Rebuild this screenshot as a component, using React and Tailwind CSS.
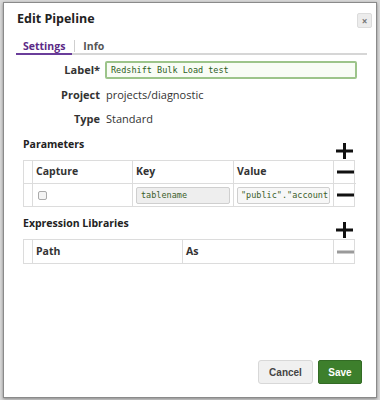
import React from 'react';

const sans = { fontFamily: '"Open Sans", "Noto Sans", sans-serif' };
const mono = { fontFamily: '"DejaVu Sans Mono", monospace' };

function PlusIcon() {
    return (
        <svg width="17" height="16" viewBox="0 0 17 16" className="block">
            <rect x="7" y="0" width="3" height="16" fill="#111" />
            <rect x="0" y="6.5" width="17" height="3" fill="#111" />
        </svg>
    );
}

function MinusIcon({ muted }) {
    return (
        <svg width="17" height="4" viewBox="0 0 17 4" className="block">
            <rect x="0" y="0.5" width="17" height="3" fill={muted ? '#9a9a9a' : '#111'} />
        </svg>
    );
}

function SectionHeader({ title }) {
    return (
        <div className="flex items-start justify-between">
            <span className="text-[10.5px] font-bold text-[#222] leading-[16px]">{title}</span>
            <div className="mt-[7px] mr-[2px]"><PlusIcon /></div>
        </div>
    );
}

export default function App() {
    return (
        <div className="w-[380px] h-[400px] bg-[#d9d9d9] pt-[2px] pl-[3px] pr-[3px] pb-[2px]" style={sans}>
            <div className="h-full bg-white border border-[#8a8a8a] shadow-[0_1px_3px_rgba(0,0,0,0.4)] flex flex-col">
                {/* Header */}
                <div className="flex items-start justify-between pl-[13px] pr-[4px] pt-[6px]">
                    <h1 className="text-[12.5px] font-bold text-[#222] leading-[20px]">Edit Pipeline</h1>
                    <button className="w-[15px] h-[15px] mt-[4px] rounded-[2px] bg-[#ececec] border border-[#dcdcdc] flex items-center justify-center text-[#777] text-[10px] font-bold leading-none">
                        ×
                    </button>
                </div>

                {/* Tabs */}
                <div className="mt-[10px] ml-[12px] mr-[9px] flex items-end border-b-2 border-[#d6d6d6]">
                    <div className="px-[7px] text-[10.5px] font-bold text-[#5b2a86] leading-[14px] border-b-2 border-[#6a3d9a] -mb-[2px]">Settings</div>
                    <div className="w-px h-[12px] bg-[#cfcfcf] mb-[1px] ml-[2px]" />
                    <div className="px-[8px] text-[10.5px] font-bold text-[#555] leading-[14px]">Info</div>
                </div>

                {/* Form */}
                <div className="pl-[19px] pr-[19px] mt-[6px] flex flex-col">
                    <div className="flex items-center h-[18px]">
                        <span className="w-[77px] text-right text-[11px] font-bold text-[#333]">Label*</span>
                        <div className="ml-[5px] flex-1 h-[18px] border-2 border-[#9cc48a] rounded-[2px] bg-[#f8fcf5] flex items-center pl-[4px]">
                            <span className="text-[8.5px] text-[#2e5e1e]" style={mono}>Redshift Bulk Load test</span>
                        </div>
                    </div>
                    <div className="flex items-center h-[18px] mt-[7px]">
                        <span className="w-[77px] text-right text-[11px] font-bold text-[#333]">Project</span>
                        <span className="ml-[6px] text-[11px] text-[#333]">projects/diagnostic</span>
                    </div>
                    <div className="flex items-center h-[18px] mt-[6px]">
                        <span className="w-[77px] text-right text-[11px] font-bold text-[#333]">Type</span>
                        <span className="ml-[6px] text-[11px] text-[#333]">Standard</span>
                    </div>
                </div>

                {/* Parameters */}
                <div className="pl-[19px] pr-[21px] mt-[8px]">
                    <SectionHeader title="Parameters" />
                    <div className="grid grid-cols-[9px_100px_101px_100px_22px] border border-[#dcdcdc] text-[10.5px] text-[#333] mt-[1px]">
                        <div className="h-[22px] border-r border-[#dcdcdc]" />
                        <div className="h-[22px] border-r border-[#dcdcdc] font-bold flex items-center pl-[3px]">Capture</div>
                        <div className="h-[22px] border-r border-[#dcdcdc] font-bold flex items-center pl-[3px]">Key</div>
                        <div className="h-[22px] border-r border-[#dcdcdc] font-bold flex items-center pl-[3px]">Value</div>
                        <div className="h-[22px] flex items-center justify-center"><MinusIcon /></div>

                        <div className="h-[23px] border-t border-r border-[#dcdcdc]" />
                        <div className="h-[23px] border-t border-r border-[#dcdcdc] flex items-center pl-[5px]">
                            <span className="w-[9px] h-[9px] border border-[#aaa] rounded-[2px] bg-[#f4f4f4]" />
                        </div>
                        <div className="h-[23px] border-t border-r border-[#dcdcdc] flex items-center px-[3px]">
                            <div className="w-full h-[17px] border border-[#cfcfcf] rounded-[2px] bg-[#eeeeee] flex items-center pl-[4px] text-[8.5px] text-[#3b5e2b]" style={mono}>tablename</div>
                        </div>
                        <div className="h-[23px] border-t border-r border-[#dcdcdc] flex items-center px-[3px]">
                            <div className="w-full h-[17px] border border-[#cfcfcf] rounded-[2px] bg-[#f7f7f7] flex items-center pl-[3px] text-[8.5px] text-[#3b5e2b] overflow-hidden whitespace-nowrap" style={mono}>"public"."account</div>
                        </div>
                        <div className="h-[23px] border-t border-[#dcdcdc] flex items-center justify-center"><MinusIcon /></div>
                    </div>
                </div>

                {/* Expression Libraries */}
                <div className="pl-[19px] pr-[21px] mt-[8px]">
                    <SectionHeader title="Expression Libraries" />
                    <div className="grid grid-cols-[9px_150px_151px_22px] border border-[#dcdcdc] text-[10.5px] text-[#333] mt-[1px]">
                        <div className="h-[23px] border-r border-[#dcdcdc]" />
                        <div className="h-[23px] border-r border-[#dcdcdc] font-bold flex items-center pl-[3px]">Path</div>
                        <div className="h-[23px] border-r border-[#dcdcdc] font-bold flex items-center pl-[3px]">As</div>
                        <div className="h-[23px] flex items-center justify-center"><MinusIcon muted /></div>
                    </div>
                </div>

                {/* Footer */}
                <div className="mt-auto flex justify-end gap-[5px] pr-[14px] pb-[13px]" style={{ fontFamily: '"Liberation Sans", Arial, sans-serif' }}>
                    <button className="w-[55px] h-[24px] rounded-[3px] bg-[#f0f0f0] border border-[#d8d8d8] text-[10px] font-bold text-[#444]">Cancel</button>
                    <button className="w-[44px] h-[24px] rounded-[2px] bg-[#3d7f2c] border border-[#336b25] text-[10px] font-bold text-white">Save</button>
                </div>
            </div>
        </div>
    );
}
